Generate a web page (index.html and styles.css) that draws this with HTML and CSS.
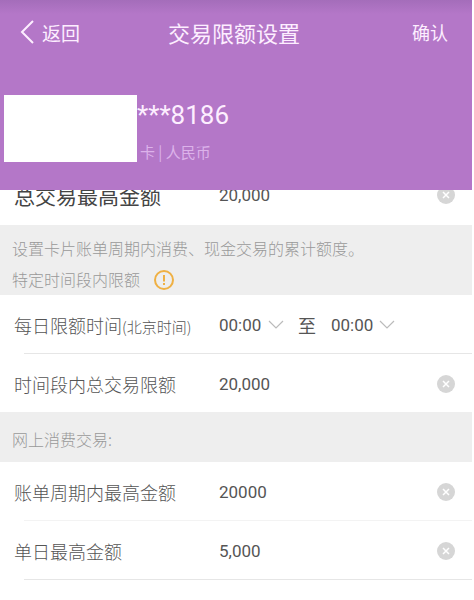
FILE: index.html
```html
<!DOCTYPE html>
<html lang="zh-CN">
<head>
  <meta charset="UTF-8" />
  <meta name="viewport" content="width=device-width, initial-scale=1" />
  <title>交易限额设置</title>
  <link rel="stylesheet" href="styles.css">
</head>
<body>

  <header class="top">
    <nav class="navbar">
      <a class="back" href="#">
        <svg width="14" height="24" viewBox="0 0 14 24"><path d="M13 1 L2 12 L13 23" fill="none" stroke="currentColor" stroke-width="2" /></svg>
        返回
      </a>
      <h1>交易限额设置</h1>
      <button class="confirm" type="button">确认</button>
    </nav>
    <div class="card">
      <div class="card-mask"></div>
      <div class="card-info">
        <div class="card-number">***8186</div>
        <div class="card-type">卡 | 人民币</div>
      </div>
    </div>
  </header>

  <main>
    <div class="row row-total">
      <label for="total">总交易最高金额</label>
      <input id="total" type="text" value="20,000">
      <button class="clear" type="button" aria-label="清除">
        <svg width="18" height="18" viewBox="0 0 18 18"><circle cx="9" cy="9" r="9" fill="#d6d6d6" /><path d="M6 6 L12 12 M12 6 L6 12" stroke="#fff" stroke-width="1.5" /></svg>
      </button>
    </div>

    <div class="hint">
      <p>设置卡片账单周期内消费、现金交易的累计额度。</p>
      <p>特定时间段内限额
        <svg class="warn" width="20" height="20" viewBox="0 0 20 20"><circle cx="10" cy="10" r="9" fill="none" stroke="#efb043" stroke-width="2" /><path d="M10 5 V11.5 M10 13 V15" stroke="#efb043" stroke-width="2" /></svg>
      </p>
    </div>

    <div class="row">
      <label for="timeFrom">每日限额时间<small>(北京时间)</small></label>
      <div class="times">
        <select id="timeFrom"><option>00:00</option></select>
        <span>至</span>
        <select id="timeTo" aria-label="结束时间"><option>00:00</option></select>
        <svg class="arrow arrow-from" width="16" height="9" viewBox="0 0 16 9"><path d="M1 1 L8 8 L15 1" fill="none" stroke="#bbb" stroke-width="1.2" /></svg>
        <svg class="arrow arrow-to" width="16" height="9" viewBox="0 0 16 9"><path d="M1 1 L8 8 L15 1" fill="none" stroke="#bbb" stroke-width="1.2" /></svg>
      </div>
    </div>
    <div class="divider"></div>
    <div class="row">
      <label for="period">时间段内总交易限额</label>
      <input id="period" type="text" value="20,000">
      <button class="clear" type="button" aria-label="清除">
        <svg width="18" height="18" viewBox="0 0 18 18"><circle cx="9" cy="9" r="9" fill="#d6d6d6" /><path d="M6 6 L12 12 M12 6 L6 12" stroke="#fff" stroke-width="1.5" /></svg>
      </button>
    </div>

    <div class="hint hint-online">
      <p>网上消费交易:</p>
    </div>

    <div class="row">
      <label for="cycle">账单周期内最高金额</label>
      <input id="cycle" type="text" value="20000">
      <button class="clear" type="button" aria-label="清除">
        <svg width="18" height="18" viewBox="0 0 18 18"><circle cx="9" cy="9" r="9" fill="#d6d6d6" /><path d="M6 6 L12 12 M12 6 L6 12" stroke="#fff" stroke-width="1.5" /></svg>
      </button>
    </div>
    <div class="divider divider-light"></div>
    <div class="row">
      <label for="daily">单日最高金额</label>
      <input id="daily" type="text" value="5,000">
      <button class="clear" type="button" aria-label="清除">
        <svg width="18" height="18" viewBox="0 0 18 18"><circle cx="9" cy="9" r="9" fill="#d6d6d6" /><path d="M6 6 L12 12 M12 6 L6 12" stroke="#fff" stroke-width="1.5" /></svg>
      </button>
    </div>
    <div class="divider"></div>
  </main>

</body>
</html>
```
FILE: styles.css
```css
* {
  box-sizing: border-box;
}
body {
  margin: 0;
  padding-right: 2px;
  background: #fff;
  color: #555;
  font-family: "Noto Sans CJK SC", sans-serif;
  font-size: 18px;
  font-weight: 300;
}
button, input, select {
  margin: 0;
  padding: 0;
  border: 0;
  background: none;
  color: inherit;
  font: inherit;
}

.top {
  position: relative;
  z-index: 1;
  padding-bottom: 21px;
  background: linear-gradient(#a46dba, #b477c8 14px);
  color: #fdeeff;
  font-weight: 400;
}
.navbar {
  display: grid;
  grid-template-columns: 1fr auto 1fr;
  align-items: center;
  height: 64px;
  padding: 0 24px 0 20px;
}
.back {
  display: flex;
  align-items: center;
  gap: 8px;
  color: inherit;
  font-size: 19px;
  text-decoration: none;
}
h1 {
  margin: 0;
  font-size: 22px;
  font-weight: 400;
}
.confirm {
  justify-self: end;
}
.card {
  display: flex;
  align-items: flex-start;
  margin-top: 31px;
  padding-left: 4px;
}
.card-mask {
  width: 133px;
  height: 67px;
  background: #fff;
}
.card-number {
  height: 40px;
  font: 26px/40px Roboto, sans-serif;
}
.card-type {
  padding-left: 3px;
  color: #dcb2ea;
  font-size: 15px;
  line-height: 34px;
}

.row {
  display: flex;
  align-items: center;
  height: 58px;
  padding: 1px 17px 0 14px;
}
.row label {
  flex: 0 0 205px;
  white-space: nowrap;
}
.row small {
  font-size: 15px;
}
.row input, .row select {
  color: #555;
  font: 17px Roboto, sans-serif;
}
.row input {
  flex: 1;
  min-width: 0;
}
.row-total {
  margin-top: -23px;
  padding-bottom: 3px;
}
.row-total label {
  color: #444;
  font-size: 21px;
  font-weight: 400;
}
.clear {
  display: flex;
}
.times {
  position: relative;
  display: flex;
  align-items: center;
  color: #555;
  font-weight: 400;
}
.times select {
  width: 64px;
  appearance: none;
}
.times span {
  margin: 0 15px;
}
.arrow {
  position: absolute;
  top: 8px;
  pointer-events: none;
}
.arrow-from {
  left: 49px;
}
.arrow-to {
  right: 0;
}
.divider {
  height: 1px;
  margin-left: 24px;
  background: #e6e6e6;
}
.divider-light {
  background: #f3f3f3;
}

.hint {
  padding: 8px 12px 0;
  background: #eee;
  color: #999;
  font-size: 16px;
  line-height: 31px;
}
.hint p {
  display: flex;
  align-items: center;
  gap: 14px;
  margin: 0;
}
.hint-online {
  padding: 12px 12px 7px;
}
```
